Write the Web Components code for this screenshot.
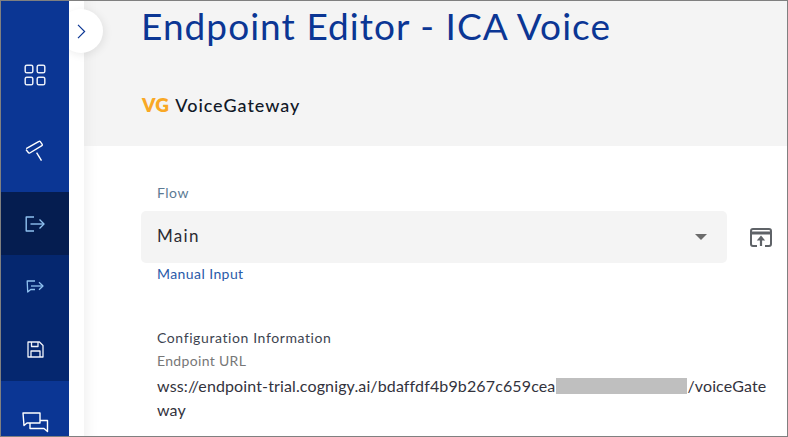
<!DOCTYPE html>
<html>
<head>
<meta charset="utf-8">
<title>Endpoint Editor</title>
<style>
  html, body { margin: 0; padding: 0; background: #fff; }
  body { font-family: "Lato", "Liberation Sans", sans-serif; }
</style>
</head>
<body>
<app-frame>
  <side-rail slot="rail"></side-rail>
  <editor-header slot="main" title-text="Endpoint Editor - ICA Voice"></editor-header>
  <editor-form slot="main"></editor-form>
</app-frame>

<script>
class AppFrame extends HTMLElement {
  constructor() {
    super();
    this.shadowDOM = this.attachShadow({ mode: "open" });
  }

  connectedCallback() {
    this.shadowDOM.innerHTML = `
      <style>
        :host {
          display: flex;
          box-sizing: border-box;
          width: 788px;
          height: 437px;
          overflow: hidden;
          position: relative;
          border: 1px solid #808080;
          background: #fff;
        }
        .rail { flex: 0 0 68px; position: relative; z-index: 2; }
        .main { flex: 1; margin-left: 15px; margin-top: -1px; min-width: 0; box-shadow: inset 14px 0 14px -12px rgba(0,0,0,.07); }
        .toggle {
          position: absolute;
          left: 58px;
          top: 8px;
          width: 44px;
          height: 44px;
          border-radius: 50%;
          background: #fff;
          box-shadow: 2px 2px 8px rgba(0,0,0,.08);
          z-index: 1;
        }
        .toggle svg { position: absolute; left: 18px; top: 15px; }
      </style>
      <div class="rail"><slot name="rail"></slot></div>
      <div class="toggle">
        <svg width="9" height="15" viewBox="0 0 9 15" fill="none" stroke="#0b3694" stroke-width="1.2"><path d="M1 .8 7.600 7.500 1 14.200"/></svg>
      </div>
      <div class="main"><slot name="main"></slot></div>
    `;
  }
}

class SideRail extends HTMLElement {
  constructor() {
    super();
    this.shadowDOM = this.attachShadow({ mode: "open" });
  }

  connectedCallback() {
    this.shadowDOM.innerHTML = `
      <style>
        :host { display: flex; flex-direction: column; height: 100%; background: #0b3694; }
        .item { display: flex; align-items: center; justify-content: center; flex: none; }
        .top { height: 191px; background: #0b3694; flex-direction: column; justify-content: flex-start; }
        .top div { display: flex; align-items: center; justify-content: center; }
        .active { height: 63px; background: #051d50; }
        .group { background: #05276f; }
        .send { height: 63px; }
        .save { height: 63px; }
        .chat { flex: 1; padding-top: 28px; box-sizing: border-box; }
        svg { display: block; fill: none; stroke-linejoin: round; }
      </style>
      <div class="item top">
        <div style="height:148px">
          <svg width="22" height="22" viewBox="0 0 22 22" stroke="#e8edf7" stroke-width="1.5">
            <rect x="1.200" y="1.200" width="7.600" height="7.600" rx="1.600"/>
            <rect x="13.200" y="1.200" width="7.600" height="7.600" rx="1.600"/>
            <rect x="1.200" y="13.200" width="7.600" height="7.600" rx="1.600"/>
            <rect x="13.200" y="13.200" width="7.600" height="7.600" rx="1.600"/>
          </svg>
        </div>
        <div style="margin-top:-9px">
          <svg width="20" height="22" viewBox="0 0 20 22" stroke="#fff" stroke-width="1.400">
            <path d="M1.200 8.600 14 1.400c.5-.3 1-.1 1.300.3l1.900 2.600c.3.5.2 1-.3 1.300L4.800 13c-.5.3-1 .2-1.300-.3L1 9.600"/>
            <path d="M11.600 12.600 16.500 20.600"/>
          </svg>
        </div>
      </div>
      <div class="item active">
        <svg width="20" height="16" viewBox="0 0 20 16" stroke="#8fc1f0" stroke-width="1.400">
          <path d="M9 1H1.200v14H9"/><path d="M5.500 8H19"/><path d="M14.500 3.500 19 8l-4.500 4.500"/>
        </svg>
      </div>
      <div class="group">
        <div class="item send">
          <svg width="18" height="13" viewBox="0 0 18 13" stroke="#8fc1f0" stroke-width="1.300">
            <path d="M9 1H1.200l.5 11 3-2.500H9"/><path d="M5 6h12"/><path d="M13 2.200 17 6l-4 3.800"/>
          </svg>
        </div>
        <div class="item save">
          <svg width="17" height="17" viewBox="0 0 17 17" stroke="#f2f4fa" stroke-width="1.300">
            <path d="M1 1h11.500L16 4.500V16H1z"/><path d="M4.500 1v4.500h6.500V1"/><path d="M4 16v-6h9v6"/>
          </svg>
        </div>
      </div>
      <div class="item chat">
        <svg width="27" height="21" viewBox="0 0 27 21" stroke="#fff" stroke-width="1.400">
          <path d="M1 1h17v10H5l-3 2.500z"/><path d="M8 11v5.500h14l3.500 3V8.500H18"/>
        </svg>
      </div>
    `;
  }
}

class EditorHeader extends HTMLElement {
  constructor() {
    super();
    this.shadowDOM = this.attachShadow({ mode: "open" });
  }

  connectedCallback() {
    this.shadowDOM.innerHTML = `
      <style>
        :host {
          display: block;
          height: 146px;
          box-sizing: border-box;
          background: #f4f4f4;
          padding: 0 0 0 57px;
          box-shadow: inset 14px 0 14px -12px rgba(0,0,0,.05);
        }
        h1 {
          margin: 0;
          font: 400 37px/52px "Lato", sans-serif;
          letter-spacing: 1.050px;
          color: #0b3694;
          white-space: nowrap;
        }
        .brand { display: flex; align-items: center; gap: 6px; margin-top: 41px; height: 24px; padding-left: 1px; }
        .vg { font: 800 19px/24px "Lato", sans-serif; color: #f9a825; letter-spacing: .3px; }
        .name { font: 500 18px/24px "Lato", sans-serif; color: #111827; letter-spacing: .95px; }
      </style>
      <h1>${this.getAttribute("title-text")}</h1>
      <div class="brand"><span class="vg">VG</span><span class="name">VoiceGateway</span></div>
    `;
  }
}

class EditorForm extends HTMLElement {
  constructor() {
    super();
    this.shadowDOM = this.attachShadow({ mode: "open" });
  }

  connectedCallback() {
    this.shadowDOM.innerHTML = `
      <style>
        :host {
          display: block;
          padding: 38px 0 0 57px;
          font-family: "Lato", sans-serif;
          color: #33333d;
        }
        .label { font-size: 14px; line-height: 18px; padding-left: 16px; color: #5c7a94; letter-spacing: .5px; }
        .row { display: flex; align-items: center; margin-top: 9px; }
        .select {
          flex: 0 0 586px;
          box-sizing: border-box;
          height: 52px;
          padding: 0 20px 0 16px;
          display: flex;
          align-items: center;
          justify-content: space-between;
          background: #f4f4f4;
          border-radius: 5px;
          font-size: 17px;
          letter-spacing: 1.300px;
          color: #2b2b33;
        }
        .select span:first-child { margin-bottom: 3px; }
        .caret { width: 0; height: 0; border: solid transparent; border-width: 6px 6px 0; border-top-color: #6b6b6b; }
        .open { margin-left: 23px; }
        .manual { font-size: 14px; line-height: 18px; margin: 2px 0 0 16px; color: #2a5aa8; letter-spacing: .42px; }
        .info { margin: 46px 0 0 16px; }
        .title { font-size: 14px; line-height: 18px; color: #3d4450; letter-spacing: .6px; }
        .field { font-size: 14px; line-height: 18px; margin-top: 5px; color: #777; letter-spacing: .33px; }
        .url {
          margin-top: 4px;
          font-size: 16px;
          line-height: 24px;
          letter-spacing: .13px;
          color: #33333d;
          white-space: nowrap;
        }
        .line { display: flex; align-items: center; }
        .redact { flex: none; width: 131px; height: 16px; margin-left: 1px; background: #bfbfbf; }
      </style>
      <div class="label">Flow</div>
      <div class="row">
        <div class="select"><span>Main</span><span class="caret"></span></div>
        <svg class="open" width="22" height="19" viewBox="0 0 22 19" fill="none" stroke="#5f6368" stroke-width="2">
          <path d="M7 18H3a2 2 0 0 1-2-2V3a2 2 0 0 1 2-2h16a2 2 0 0 1 2 2v13a2 2 0 0 1-2 2h-4"/>
          <path d="M1 5h20" stroke-width="3"/>
          <path d="M11 18V11" stroke-width="2.200"/><path d="M11 7.500 6.800 12.500h8.400z" fill="#5f6368" stroke="none"/>
        </svg>
      </div>
      <div class="manual">Manual Input</div>
      <div class="info">
        <div class="title">Configuration Information</div>
        <div class="field">Endpoint URL</div>
        <div class="url">
          <div class="line"><span>wss://endpoint-trial.cognigy.ai/bdaffdf4b9b267c659cea</span><span class="redact"></span><span>/voiceGate</span></div>
          <div>way</div>
        </div>
      </div>
    `;
  }
}

customElements.define("app-frame", AppFrame);
customElements.define("side-rail", SideRail);
customElements.define("editor-header", EditorHeader);
customElements.define("editor-form", EditorForm);
</script>
</body>
</html>
